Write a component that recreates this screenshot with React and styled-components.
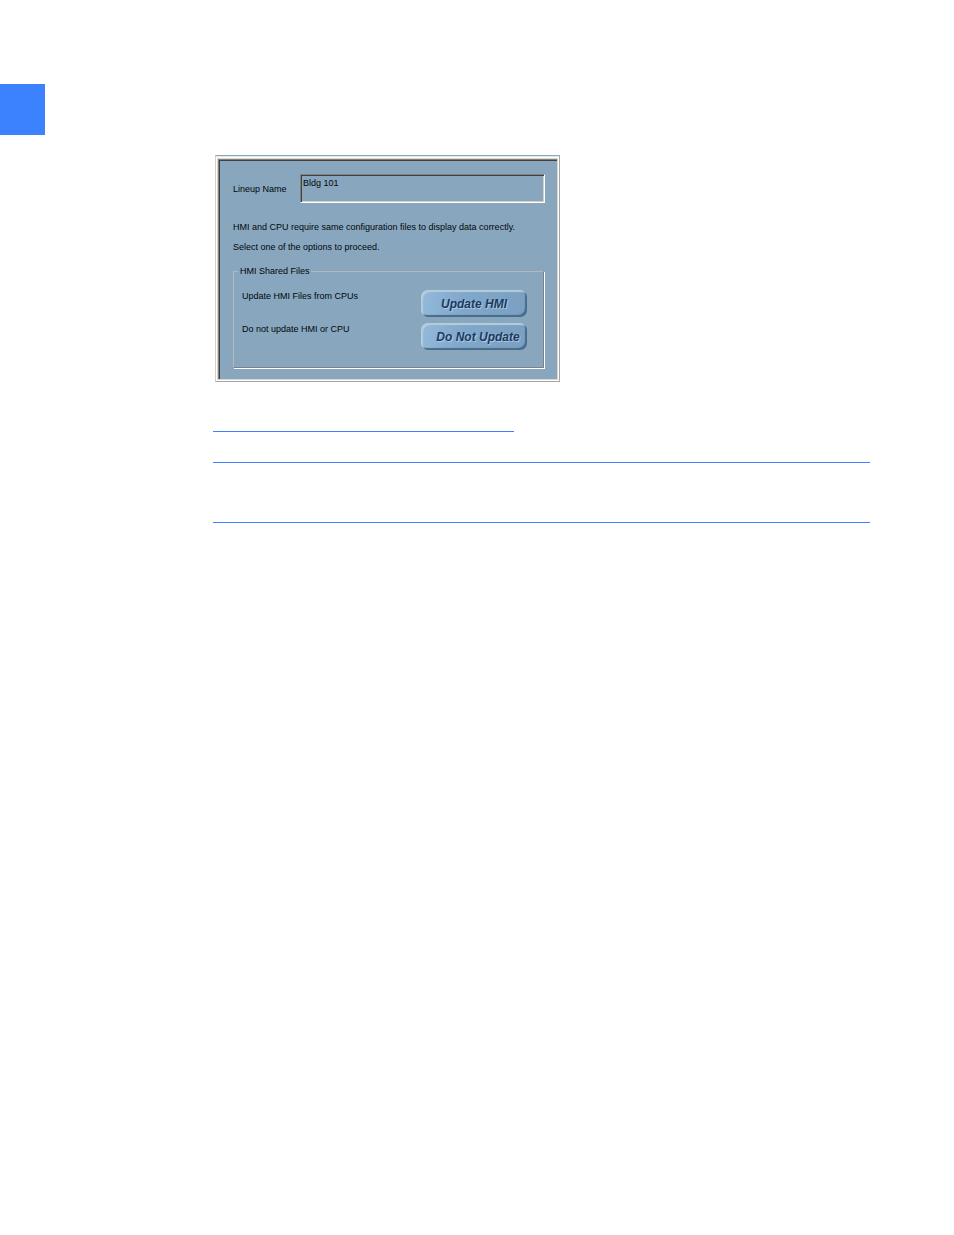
import React from 'react';
import styled, { createGlobalStyle } from 'styled-components';

const Global = createGlobalStyle`
  *, *::before, *::after { box-sizing: border-box; }
  body { margin: 0; background: #fff; }
`;

const Page = styled.div`
  display: flex;
  align-items: flex-start;
  min-height: 100vh;
  padding: 84px 84px 84px 0;
  font-family: "Liberation Sans", Arial, sans-serif;
  font-size: 9px;
  line-height: 12px;
  color: #02060a;
`;

const ChapterTab = styled.div`
  flex: none;
  width: 45px;
  height: 51px;
  background: #3c82ff;
`;

const Content = styled.main`
  flex: 1;
  min-width: 0;
  margin-left: 168px;
  padding-top: 71px;
`;

const Rule = styled.hr`
  width: ${(p) => p.$width || '100%'};
  height: 1px;
  margin: ${(p) => p.$gap}px 0 0;
  border: 0;
  background: #3c82ff;
`;

const Frame = styled.div`
  width: 345px;
  max-width: 100%;
  margin-left: 2px;
  padding: 1px 0 0;
  border: 1px solid;
  border-color: #8ba9c2 #a5a5a5 #a5a5a5 #d4d0c8;
  background: #e6e5df;
`;

const Highlight = styled.div`
  border: 1px solid #fff;
`;

const Panel = styled.form`
  display: flex;
  flex-direction: column;
  padding: 15px 12px 11px 15px;
  border: 1px solid #d9d6cf;
  background: #88a7bf;
  box-shadow: inset 1px 1px #808080, inset 2px 2px #404040;
`;

const NameRow = styled.div`
  display: flex;
  align-items: center;
  gap: 12px;
`;

const FieldLabel = styled.label`
  flex: none;
  width: 55px;
  white-space: nowrap;
`;

const NameBox = styled.input`
  flex: 1;
  min-width: 0;
  height: 29px;
  padding: 1px 2px 13px;
  border: 1px solid;
  border-color: #808080 #fff #fff #808080;
  border-radius: 0;
  outline: 0;
  background: #88a7bf;
  box-shadow: inset 1px 1px #404040, inset -1px -1px #d4d0c8;
  color: inherit;
  font: inherit;
`;

const Message = styled.div`
  display: grid;
  gap: 8px;
  padding: 18px 0 12px;
  white-space: nowrap;

  p { margin: 0; }
`;

const Group = styled.fieldset`
  min-width: 0;
  margin: 0 1px 0 0;
  padding: 13px 16px 11px 8px;
  border: 1px solid;
  border-color: #b5b8b9 #808080 #808080 #b5b8b9;
  box-shadow: 1px 1px #fff;
`;

const Legend = styled.legend`
  margin-left: -4px;
  padding: 0 1px 0 2px;
`;

const Option = styled.div`
  display: flex;
  justify-content: space-between;
  align-items: flex-start;
  height: 33px;
`;

const GlossyButton = styled.button`
  width: 106px;
  height: 27px;
  padding: ${(p) => (p.$wide ? '0 2px 0 10px' : '0 2px')};
  border: 0;
  border-radius: 7px;
  background: linear-gradient(100deg, #94b9dc 0%, #80a8ca 40%, #7b9fc0 100%);
  box-shadow: inset 2px 2px 1px #b4ceda, inset -2px -2px 1px #476b88;
  color: #1d3a62;
  font: italic bold 12px/20px "Liberation Sans", Arial, sans-serif;
  text-shadow: 1px 1px 1px #b4cde2;
  white-space: nowrap;
`;

const options = [
  { id: 'update', label: 'Update HMI Files from CPUs', action: 'Update HMI' },
  { id: 'skip', label: 'Do not update HMI or CPU', action: 'Do Not Update', wide: true },
];

export default function App() {
  return (
    <>
      <Global />
      <Page>
        <ChapterTab />
        <Content>
          <Frame>
            <Highlight>
              <Panel>
                <NameRow>
                  <FieldLabel htmlFor="lineup">Lineup Name</FieldLabel>
                  <NameBox id="lineup" defaultValue="Bldg 101" />
                </NameRow>
                <Message>
                  <p>HMI and CPU require same configuration files to display data correctly.</p>
                  <p>Select one of the options to proceed.</p>
                </Message>
                <Group>
                  <Legend>HMI Shared Files</Legend>
                  {options.map((o) => (
                    <Option key={o.id}>
                      <span id={o.id}>{o.label}</span>
                      <GlossyButton type="button" aria-describedby={o.id} $wide={o.wide}>
                        {o.action}
                      </GlossyButton>
                    </Option>
                  ))}
                </Group>
              </Panel>
            </Highlight>
          </Frame>
          <Rule $gap={49} $width="301px" />
          <Rule $gap={30} />
          <Rule $gap={59} />
        </Content>
      </Page>
    </>
  );
}
